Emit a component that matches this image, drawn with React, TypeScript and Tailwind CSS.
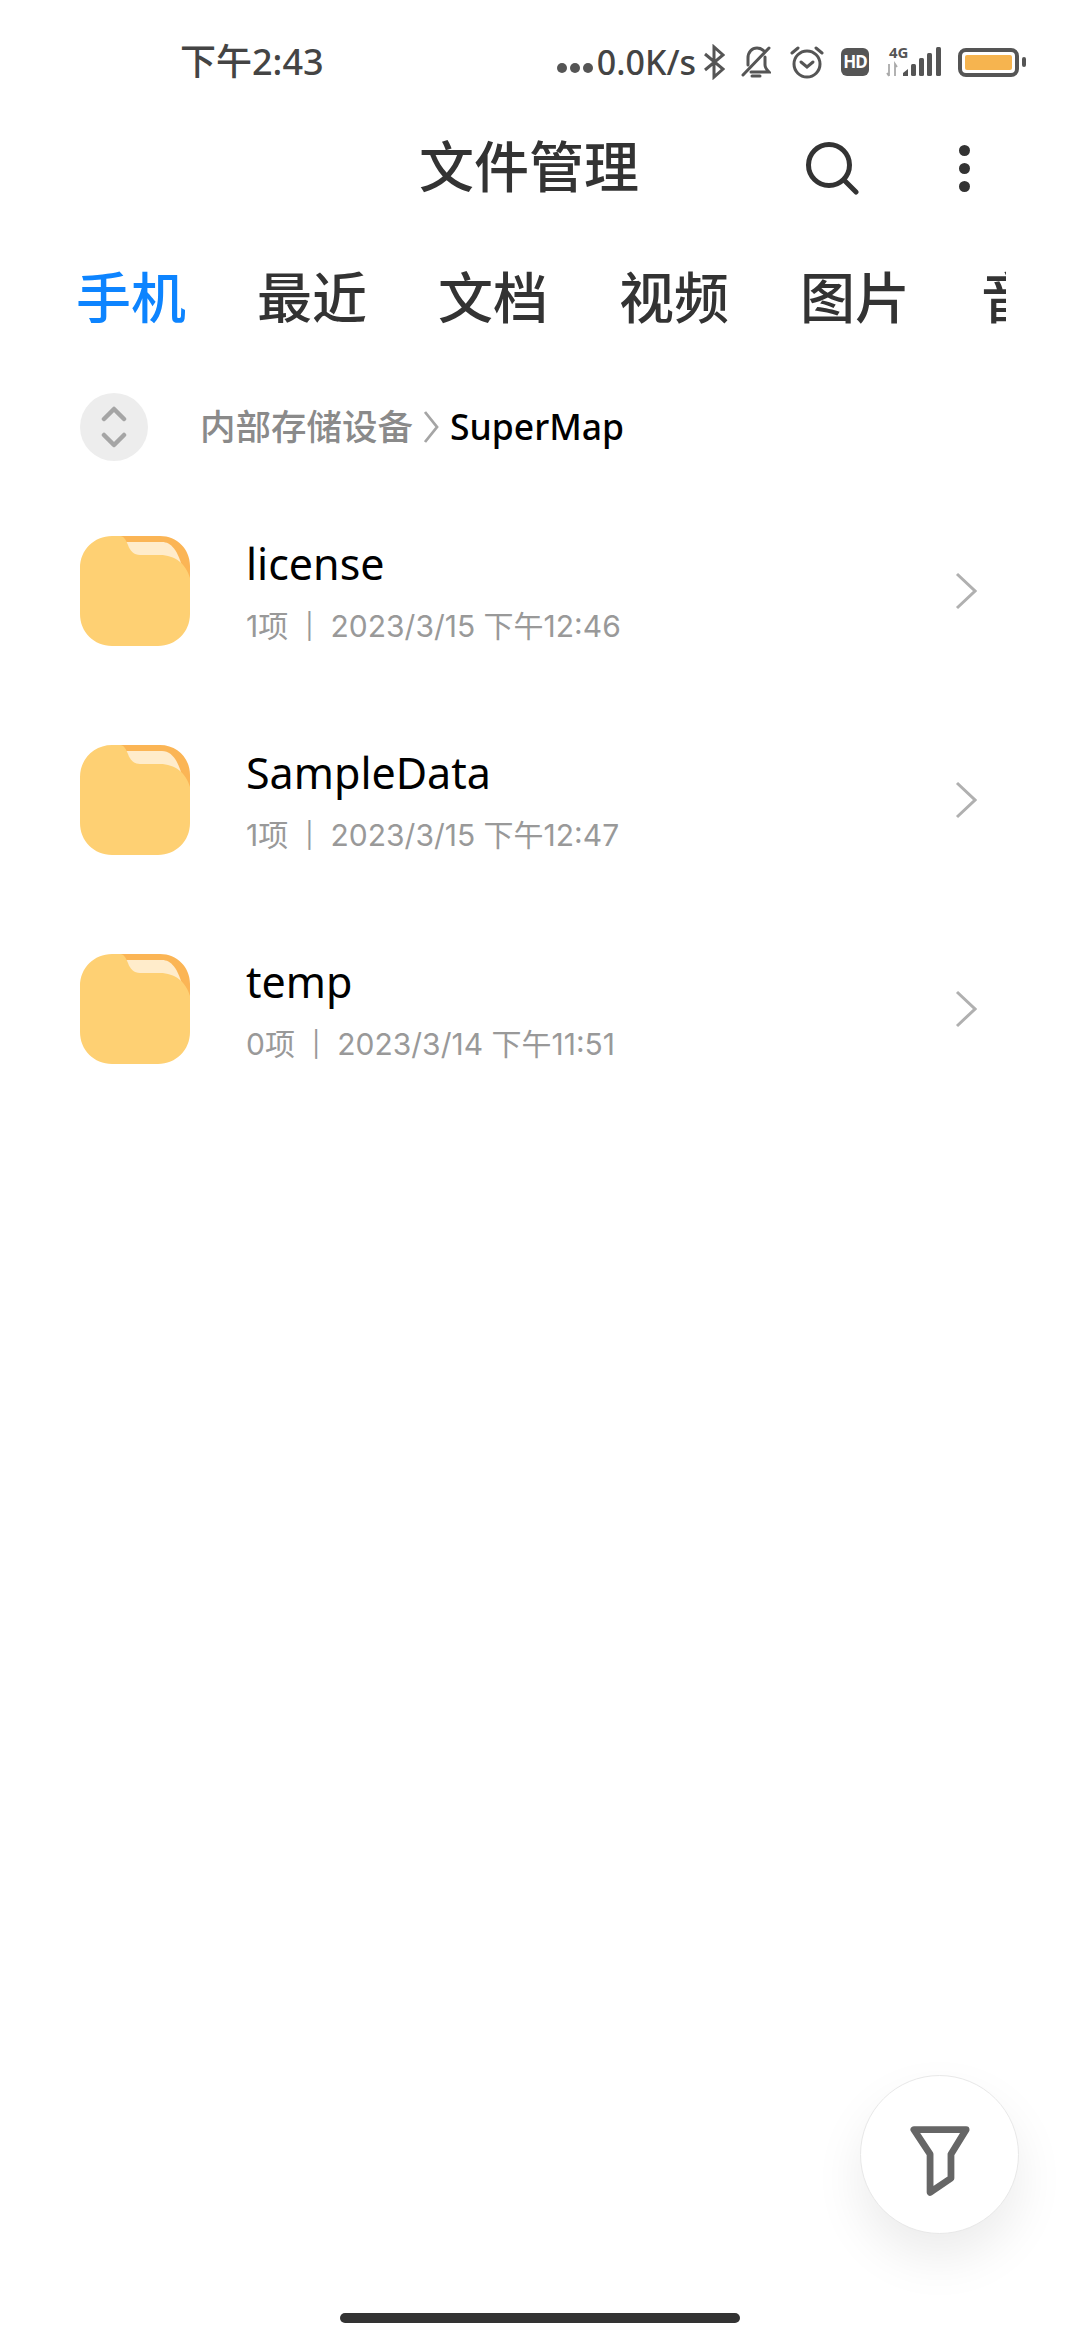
const font = { fontFamily: '"Noto Sans", "Noto Sans CJK SC", sans-serif' };
const metaFont = { fontFamily: 'Inter, "Noto Sans CJK SC", sans-serif' };

const tabs = ['手机', '最近', '文档', '视频', '图片', '音频'];

const folders = [
  { name: 'license', meta: '1项', date: '2023/3/15 下午12:46' },
  { name: 'SampleData', meta: '1项', date: '2023/3/15 下午12:47' },
  { name: 'temp', meta: '0项', date: '2023/3/14 下午11:51' },
];

const FolderIcon = () => (
  <svg width="110" height="110" viewBox="0 0 110 110" className="shrink-0">
    <path d="M32 0H80C97 0 110 13 110 30V60H36V0Z" fill="#fbb555" />
    <path d="M44 6H82C91 6 98 14 103 34H52Z" fill="#ffeccb" />
    <path
      d="M32 0H40C44 0 46 4 48 9C50 15 54 19 60 19H80C95 19 106 28 110 42V78C110 96 96 110 78 110H32C14 110 0 96 0 78V32C0 14 14 0 32 0Z"
      fill="#fed073"
    />
  </svg>
);

const StatusIcons = () => (
  <div className="flex items-center text-[#444]">
    <div className="flex gap-[3px] mt-[12px] mr-[4px]">
      <span className="w-[10px] h-[10px] rounded-full bg-[#555]" />
      <span className="w-[10px] h-[10px] rounded-full bg-[#555]" />
      <span className="w-[10px] h-[10px] rounded-full bg-[#555]" />
    </div>
    <span className="text-[34px] font-medium leading-[40px]">0.0K/s</span>
    {/* bluetooth */}
    <svg width="22" height="36" viewBox="0 0 22 36" className="ml-[7px]" fill="none" stroke="#555" strokeWidth="3">
      <path d="M2 10L20 25L11 33V3L20 11L2 26" />
    </svg>
    {/* muted bell */}
    <svg width="30" height="34" viewBox="0 0 30 34" className="ml-[16px]" fill="none" stroke="#555" strokeWidth="3" strokeLinecap="round">
      <path d="M7 20V13C7 7 11 3 16 3C19 3 21 4 23 6M24 12V20C24 23 26 25 28 27H10" />
      <path d="M11 31H19" />
      <path d="M2 30L28 3" />
    </svg>
    {/* alarm */}
    <svg width="34" height="34" viewBox="0 0 34 34" className="ml-[19px]" fill="none" stroke="#555" strokeWidth="3" strokeLinecap="round">
      <circle cx="17" cy="19" r="13" />
      <path d="M11 17L17 22L23 17" />
      <path d="M2 8L8 3M32 8L26 3" />
    </svg>
    {/* HD */}
    <span className="ml-[17px] w-[28px] h-[28px] rounded-[6px] bg-[#555] text-white text-[17px] font-bold leading-[28px] text-center tracking-[-1px]">HD</span>
    {/* 4G signal */}
    <svg width="58" height="32" viewBox="0 0 58 32" className="ml-[17px]">
      <text x="3" y="12" fontSize="15" fontWeight="700" fill="#555" fontFamily="Noto Sans">4G</text>
      <path d="M3 18V30M1 27L3 30M9 30V18L11 21" stroke="#aaa" strokeWidth="1.8" fill="none" />
      <path d="M17 30V27L22 23V30Z" fill="#555" />
      <rect x="25" y="18" width="5" height="12" rx="1.5" fill="#555" />
      <rect x="33" y="12" width="5" height="18" rx="1.5" fill="#555" />
      <rect x="41" y="7" width="5" height="23" rx="1.5" fill="#555" />
      <rect x="50" y="1" width="5" height="29" rx="1.5" fill="#555" />
    </svg>
    {/* battery */}
    <div className="ml-[14px] flex items-center gap-[3px]">
      <div className="w-[61px] h-[29px] rounded-[8px] border-[4px] border-[#555] p-[3px]">
        <div className="w-full h-full rounded-[2px] bg-[#f6b44f]" />
      </div>
      <span className="w-[4px] h-[10px] rounded-[2px] bg-[#555]" />
    </div>
  </div>
);

export default function App() {
  return (
    <div className="relative w-[1080px] h-[2340px] bg-white overflow-hidden" style={font}>
      {/* status bar */}
      <div className="h-[124px] flex items-start justify-between pt-[42px] pl-[180px] pr-[54px]">
        <span className="text-[36px] font-medium leading-[40px] text-[#444]">下午2:43</span>
        <StatusIcons />
      </div>

      {/* title */}
      <div className="h-[90px] relative flex items-center justify-center">
        <h1 className="text-[55px] font-medium text-[#333] ml-[-22px] mt-[-5px]">文件管理</h1>
        <div className="absolute right-[110px] top-0 h-full flex items-center gap-[100px]">
          <svg width="54" height="54" viewBox="0 0 54 54" fill="none" stroke="#333" strokeWidth="5" strokeLinecap="round" className="mt-[-2px]">
            <circle cx="24" cy="24" r="20.5" />
            <path d="M39 39L51 51" />
          </svg>
          <div className="flex flex-col gap-[7px] mt-[-2px]">
            <span className="w-[11px] h-[11px] rounded-full bg-[#333]" />
            <span className="w-[11px] h-[11px] rounded-full bg-[#333]" />
            <span className="w-[11px] h-[11px] rounded-full bg-[#333]" />
          </div>
        </div>
      </div>

      {/* tabs */}
      <div className="w-[1006px] overflow-hidden mt-[42px] pl-[76px] flex gap-[71px] h-[80px] items-center">
        {tabs.map((t, i) => (
          <span
            key={t}
            className={`shrink-0 text-[55px] font-medium leading-none ${i === 0 ? 'text-[#0d84ff]' : 'text-[#333]'}`}
          >
            {t}
          </span>
        ))}
      </div>

      {/* breadcrumb */}
      <div className="mt-[57px] pl-[80px] flex items-center h-[68px]">
        <div className="w-[68px] h-[68px] rounded-full bg-[#ededed] flex items-center justify-center">
          <svg width="26" height="44" viewBox="0 0 26 44" fill="none" stroke="#a5a5a5" strokeWidth="4.5" strokeLinecap="round" strokeLinejoin="round">
            <path d="M3 14L13 4L23 14" />
            <path d="M3 30L13 40L23 30" />
          </svg>
        </div>
        <span className="ml-[52px] text-[35.5px] text-[#8a8a8a] font-medium">内部存储设备</span>
        <svg width="18" height="34" viewBox="0 0 18 34" className="ml-[9px]" fill="none" stroke="#a5a5a5" strokeWidth="2.8">
          <path d="M3 2L15 17L3 32" />
        </svg>
        <span className="ml-[10px] text-[35.5px] text-black font-medium">SuperMap</span>
      </div>

      {/* folder rows */}
      <div className="mt-[75px] flex flex-col gap-[99px] pl-[80px] pr-[103px]">
        {folders.map((f) => (
          <div key={f.name} className="flex items-center h-[110px]">
            <FolderIcon />
            <div className="ml-[56px] flex-1">
              <div className="text-[43px] text-black leading-[50px] mt-[1px]">{f.name}</div>
              <div className="mt-[19px] text-[30px] text-[#999] leading-[36px] flex items-center" style={metaFont}>
                <span>{f.meta}</span>
                <span className="mx-[17px] text-[25px]">|</span>
                <span>{f.date}</span>
              </div>
            </div>
            <svg width="22" height="38" viewBox="0 0 22 38" fill="none" stroke="#b0b0b0" strokeWidth="3" className="shrink-0">
              <path d="M2 2L20 19L2 36" />
            </svg>
          </div>
        ))}
      </div>

      {/* filter button */}
      <div className="absolute left-[860px] top-[2075px] w-[159px] h-[159px] rounded-full bg-white border border-[#e8e8e8] shadow-[0_24px_50px_rgba(0,0,0,0.08)] flex items-center justify-center">
        <svg width="60" height="70" viewBox="0 0 57 67" fill="none" stroke="#666" strokeWidth="6.5" strokeLinejoin="round" className="mt-[12px]">
          <path d="M3.5 3.5H53.5L39 27V50L19 63.5V27Z" />
        </svg>
      </div>

      {/* home indicator */}
      <div className="absolute left-[340px] top-[2313px] w-[400px] h-[10px] rounded-full bg-[#333]" />
    </div>
  );
}
